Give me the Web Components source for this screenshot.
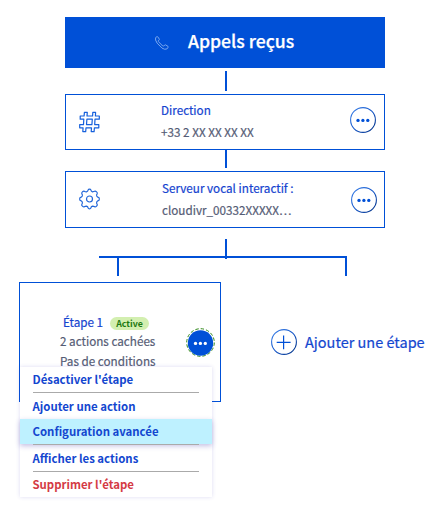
<!DOCTYPE html>
<html lang="fr">
<head>
<meta charset="utf-8">
<title>Appels reçus</title>
<style>
html,body{margin:0;background:#fff}
body{width:433px;height:512px;overflow:hidden;font-family:"Noto Sans CJK SC","Noto Sans",sans-serif}
</style>
</head>
<body>
<call-flow></call-flow>
<script>
const define = (name, markup) => customElements.define(name, class extends HTMLElement {
  constructor() {
    super();
    this.attachShadow({ mode: 'open' }).innerHTML = markup;
  }
});

define('flow-line', `<style>
:host{display:block;width:2px;height:20px;background:#0050d7;flex:none}
</style>`);

define('text-line', `<style>
:host{display:block;white-space:nowrap;height:20px;line-height:20px;font-size:11.7px;color:#555c75;-webkit-text-stroke:.2px currentColor}
</style><slot></slot>`);

define('flow-header', `<style>
:host{display:flex;align-items:center;box-sizing:border-box;width:320px;height:51px;padding-left:90px;background:#0050d7;color:#fff}
svg{display:block;width:14px;height:14px;margin-right:19px;flex:none}
span{font-size:17.6px;font-weight:500;line-height:26px;white-space:nowrap;padding-bottom:3px;-webkit-text-stroke:.25px currentColor}
</style>
<svg viewBox="0 0 14 14" fill="none" stroke="#86b0f1" stroke-width=".9" stroke-linejoin="round"><path d="M.6 1.6 2 .6Q2.5.4 2.8.9L4.3 3.1Q4.5 3.6 4.1 4L3.3 4.8Q3.1 5.2 3.5 5.7L7.7 10Q8.3 10.5 8.7 10L9.7 9Q10.1 8.6 10.6 8.9L13 10.4Q13.5 10.8 13.1 11.3L11.8 13Q9.8 13.9 7 12.1L2.1 7.1Q-.2 3.7.6 1.6Z"/></svg>
<span><slot></slot></span>`);

define('more-button', `<style>
:host{display:block;width:26px;height:26px;flex:none}
svg{display:block;overflow:visible}
.on{display:none}
:host([active]) .on{display:block}
:host([active]) .off{display:none}
</style>
<svg class="off" width="26" height="26" viewBox="0 0 26 26"><defs><linearGradient id="g" x1="0" y1="0" x2="1" y2="1"><stop offset="0" stop-color="#3e83eb"/><stop offset=".5" stop-color="#1758c9"/><stop offset="1" stop-color="#002e80"/></linearGradient></defs><circle cx="13" cy="13" r="12.4" fill="#fff" stroke="url(#g)" stroke-width="1.1"/><g fill="#0050d7"><circle cx="8" cy="13.4" r="1.65"/><circle cx="12.9" cy="13.4" r="1.65"/><circle cx="17.8" cy="13.4" r="1.65"/></g></svg>
<svg class="on" width="26" height="26" viewBox="0 0 26 26"><circle cx="13.5" cy="12.5" r="13.8" fill="none" stroke="#328a1c" stroke-width="1" stroke-dasharray="3.4 2"/><circle cx="13.5" cy="13" r="12.7" fill="#0050d7"/><g fill="#fff"><circle cx="8.5" cy="13.4" r="1.65"/><circle cx="13.4" cy="13.4" r="1.65"/><circle cx="18.3" cy="13.4" r="1.65"/></g></svg>`);

define('flow-card', `<style>
:host{display:flex;box-sizing:border-box;width:320px;border:1px solid #0050d7;background:#fff}
.icon{width:22px;margin-left:13px;flex:none}
.body{flex:1;margin-left:60px;padding-top:var(--top,5px)}
.title{display:block;color:#1443cf;height:22px}
.more{margin-right:var(--right,8px);padding-top:var(--more,13px)}
</style>
<div class="icon"><slot name="icon"></slot></div>
<div class="body"><span class="title"><slot name="title"></slot></span><slot></slot></div>
<div class="more"><more-button></more-button></div>`);

define('icon-hash', `<style>:host{display:block;padding-top:16px}svg{display:block}</style>
<svg width="22" height="22" viewBox="0 0 22 22" fill="none" stroke="#1560dc" stroke-width="1.2" stroke-linejoin="round"><path d="M5.4 1.4H8.3L8 5H13.6L13.8 1.4H16.6L16.4 5H20.3V8.2H16L15.7 13.6H19.8V16.8H15.4L15.1 20.6H12.2L12.5 16.8H7L6.7 20.6H3.8L4.1 16.8H.7V13.6H4.5L4.8 8.2H1.2V5H5.1ZM7.9 8.2 7.5 13.6H12.9L13.3 8.2Z"/></svg>`);

define('icon-gear', `<style>:host{display:block;padding-top:16px}svg{display:block}</style>
<svg width="22" height="22" viewBox="0 0 22 22" fill="none" stroke="#2367d9" stroke-width="1.2" stroke-linejoin="round"><path d="M7.5 3.8Q8.9 3.4 9.2 1.9Q9.4 1.2 10.5 1.2T11.8 1.9Q12.1 3.4 13.5 3.8Q14.8 3.6 15.8 3.2Q16.6 3 17.6 3.9T18.2 5.6Q17.3 6.8 17.7 8Q18.4 9.3 19.8 9.6Q20.3 9.9 20.3 11T19.8 12.4Q18.4 12.7 17.7 14Q17.3 15.2 18.2 16.4Q18.5 17.2 17.6 18.1T15.8 18.8Q14.8 18.2 13.5 18.2Q12.1 18.6 11.8 20.1Q11.6 20.8 10.5 20.8T9.2 20.1Q8.9 18.6 7.5 18.2Q6.2 18.2 5.2 18.8Q4.4 19 3.4 18.1T2.8 16.4Q3.7 15.2 3.3 14Q2.6 12.7 1.2 12.4Q.7 12.1.7 11T1.2 9.6Q2.6 9.3 3.3 8Q3.7 6.8 2.8 5.6Q2.5 4.8 3.4 3.9T5.2 3.2Q6.2 3.8 7.5 3.8Z"/><circle cx="10.5" cy="11" r="3"/></svg>`);

define('status-pill', `<style>
:host{display:block;box-sizing:border-box;width:39px;height:13px;border-radius:7px;background:#d3efb0;color:#1f7a12;font-size:8.8px;font-weight:700;line-height:13px;text-align:center}
</style><slot></slot>`);

define('menu-item', `<style>
:host{display:block;height:25px;line-height:24px;padding-left:12.5px;color:#1346cf;font-size:11.4px;font-weight:700;white-space:nowrap}
:host([danger]){color:#d43a44}
:host([selected]){background:#bef1ff;box-shadow:0 2px 5px rgba(70,60,170,.32)}
</style><slot></slot>`);

define('step-menu', `<style>
:host{display:block;box-sizing:border-box;width:192px;height:130px;background:#fff;box-shadow:0 0 4px rgba(80,70,190,.2)}
hr{height:1px;margin:0 13px;border:0;background:#aaa}
</style>
<menu-item>Désactiver l'étape</menu-item><hr>
<menu-item style="margin-top:1px">Ajouter une action</menu-item>
<menu-item selected>Configuration avancée</menu-item><hr>
<menu-item style="margin-top:1px">Afficher les actions</menu-item><hr>
<menu-item danger>Supprimer l'étape</menu-item>`);

define('step-card', `<style>
:host{display:block;position:relative;box-sizing:border-box;width:202px;height:120px;border:1px solid #0050d7;background:#fff}
.row{display:flex;padding-top:30px}
.text{width:127px;padding-left:40px}
.head{display:flex;align-items:center;height:18px;padding:1px 0 0 3px;margin-bottom:-1px}
.head text-line{color:#1443cf;width:47px;height:22px}
more-button{margin-top:17px}
step-menu{position:absolute;left:0;top:84px}
</style>
<div class="row"><div class="text">
<div class="head"><text-line>Étape 1</text-line><status-pill>Active</status-pill></div>
<text-line>2 actions cachées</text-line>
<text-line>Pas de conditions</text-line>
</div><more-button active></more-button></div>
<step-menu></step-menu>`);

define('add-step', `<style>
:host{display:flex;align-items:center;gap:8px;height:26px;color:#1346cf;font-size:14.5px;line-height:26px;white-space:nowrap;-webkit-text-stroke:.2px currentColor}
svg{display:block;flex:none}
</style>
<svg width="26" height="26" viewBox="0 0 26 26" fill="none"><defs><linearGradient id="p" x1="0" y1="0" x2="1" y2="1"><stop offset="0" stop-color="#3e83eb"/><stop offset=".5" stop-color="#1758c9"/><stop offset="1" stop-color="#002e80"/></linearGradient></defs><circle cx="13" cy="13" r="12.4" stroke="url(#p)" stroke-width="1.1"/><path d="M5.7 13.4H19.6M12.6 6.4V20.3" stroke="#0050d7" stroke-width="1.2"/></svg>
<span><slot></slot></span>`);

define('branch-lines', `<style>
:host{display:grid;grid-template-columns:18px 2px 106px 2px 118px 2px;grid-template-rows:17px 2px 1px 17px;width:248px;margin-left:99px}
i{background:#0050d7}
.trunk{grid-area:1/4/4/5}.bar{grid-area:2/1/3/7}.left{grid-area:2/2/5/3}.right{grid-area:2/6/5/7}
</style><i class="trunk"></i><i class="bar"></i><i class="left"></i><i class="right"></i>`);

define('call-flow', `<style>
:host{display:block;padding-top:17px}
.trunk{display:flex;flex-direction:column;align-items:center;width:320px;margin-left:65px}
.trunk flow-line{margin-left:2px}
.branches{display:flex;margin:6px 0 0 19px}
</style>
<div class="trunk">
<flow-header>Appels reçus</flow-header>
<flow-line style="margin-top:3px;margin-bottom:3px"></flow-line>
<flow-card style="height:56px;--more:12px"><icon-hash slot="icon"></icon-hash><text-line slot="title" style="color:inherit">Direction</text-line><text-line>+33 2 XX XX XX XX</text-line></flow-card>
<flow-line style="height:18px;margin-bottom:3px"></flow-line>
<flow-card style="height:57px;--right:7px;--more:15px;--top:6px"><icon-gear slot="icon"></icon-gear><text-line slot="title" style="color:inherit;padding-left:1px">Serveur vocal interactif :</text-line><text-line style="padding-left:1px">cloudivr_00332XXXXX…</text-line></flow-card>
</div>
<branch-lines style="margin-top:11px"></branch-lines>
<div class="branches"><step-card></step-card><add-step style="margin:47px 0 0 50px">Ajouter une étape</add-step></div>`);
</script>
</body>
</html>
